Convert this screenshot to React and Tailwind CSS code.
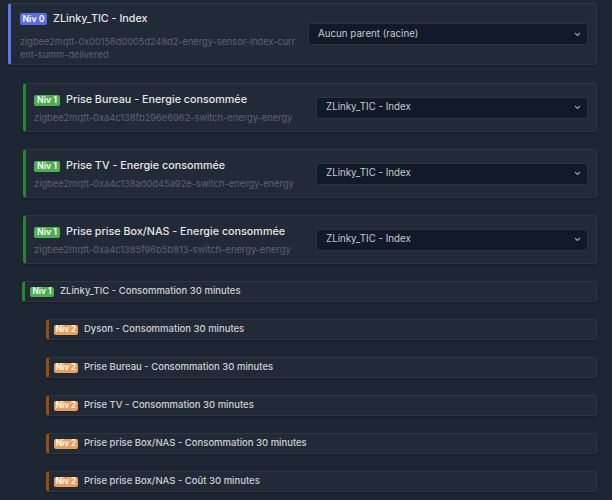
import React from "react";

const LEVELS = {
  0: { border: "border-l-[#5a78f0]", badge: "bg-[#5b6ee6]", label: "Niv 0" },
  1: { border: "border-l-[#1f8a30]", badge: "bg-[#4fae52]", label: "Niv 1" },
  2: { border: "border-l-[#9a4c0c]", badge: "bg-[#e8a15c]", label: "Niv 2" },
};

const cardBase =
  "shrink-0 mr-[15px] border border-[#2f3745] border-l-[3px] rounded-[3px] bg-[#232a37] shadow-[0_1px_2px_rgba(0,0,0,0.35)]";

function Badge({ level, small }) {
  const l = LEVELS[level];
  return (
    <span
      className={`${l.badge} inline-flex items-center justify-center rounded-[2px] text-white font-semibold leading-none shrink-0 ${
        small ? "h-[10px] w-[24px] text-[8.25px]" : "h-[11px] w-[26px] text-[8.75px]"
      }`}
    >
      {l.label}
    </span>
  );
}

function Chevron() {
  return (
    <svg width="7" height="5" viewBox="0 0 7 5" className="shrink-0">
      <path d="M1 1l2.5 2.5L6 1" fill="none" stroke="#9aa1ad" strokeWidth="1.1" />
    </svg>
  );
}

function Select({ value, width }) {
  return (
    <div
      className={`${width} shrink-0 h-[22px] flex items-center justify-between rounded-[3px] bg-[#131a27] border border-[#2c3442] pl-[9px] pr-[6px]`}
    >
      <span className="text-[9.75px] text-[#c5cad2] whitespace-nowrap">{value}</span>
      <Chevron />
    </div>
  );
}

function FullCard({ level, title, entity, parent }) {
  return (
    <div
      className={`${cardBase} ${LEVELS[level].border} ml-[23px] h-[49px] pl-[8px] pr-[8px] flex items-center gap-[10px]`}
    >
      <div className="flex-1 min-w-0 self-start pt-[9px]">
        <div className="flex items-center gap-[6px] h-[14px]">
          <Badge level={level} />
          <span className="text-[10.75px] font-medium text-[#e3e5ea] whitespace-nowrap">{title}</span>
        </div>
        <div className="mt-[4px] text-[9.3px] leading-[13px] text-[#5b6270] whitespace-nowrap">{entity}</div>
      </div>
      <Select value={parent} width="w-[272px]" />
    </div>
  );
}

function CompactCard({ level, title, ml }) {
  return (
    <div className={`${cardBase} ${LEVELS[level].border} ${ml} h-[21px] flex items-center gap-[6px] pl-[5px]`}>
      <Badge level={level} small />
      <span className="text-[9.5px] font-medium text-[#cdd0d6] whitespace-nowrap">{title}</span>
    </div>
  );
}

export default function App() {
  return (
    <div
      className="w-[612px] h-[500px] overflow-hidden bg-[#1f2633] pt-[3px] flex flex-col gap-[17px]"
      style={{ fontFamily: "Inter, 'Noto Sans', sans-serif" }}
    >
      <div
        className={`${cardBase} ${LEVELS[0].border} ml-[8px] mb-[1px] h-[62px] pl-[9px] pr-[8px] flex items-center gap-[9px]`}
      >
        <div className="flex-1 min-w-0 self-start pt-[8px]">
          <div className="flex items-center gap-[6px] h-[14px]">
            <span className="bg-[#5b6ee6] inline-flex items-center justify-center rounded-[2px] text-white font-semibold leading-none shrink-0 h-[12px] w-[27px] text-[8.75px]">
              Niv 0
            </span>
            <span className="text-[10.75px] font-medium text-[#e3e5ea] whitespace-nowrap">ZLinky_TIC - Index</span>
          </div>
          <div className="mt-[9px] text-[9.2px] leading-[13px] text-[#5b6270] break-all">
            zigbee2mqtt-0x00158d0005d248d2-energy-sensor-index-current-summ-delivered
          </div>
        </div>
        <Select value="Aucun parent (racine)" width="w-[280px]" />
      </div>
      <FullCard
        level={1}
        title="Prise Bureau - Energie consommée"
        entity="zigbee2mqtt-0xa4c138fb296e6962-switch-energy-energy"
        parent="ZLinky_TIC - Index"
      />
      <FullCard
        level={1}
        title="Prise TV - Energie consommée"
        entity="zigbee2mqtt-0xa4c138ad0d45a92e-switch-energy-energy"
        parent="ZLinky_TIC - Index"
      />
      <FullCard
        level={1}
        title="Prise prise Box/NAS - Energie consommée"
        entity="zigbee2mqtt-0xa4c1385f96b5b813-switch-energy-energy"
        parent="ZLinky_TIC - Index"
      />
      <CompactCard level={1} ml="ml-[22px]" title="ZLinky_TIC - Consommation 30 minutes" />
      <CompactCard level={2} ml="ml-[46px]" title="Dyson - Consommation 30 minutes" />
      <CompactCard level={2} ml="ml-[46px]" title="Prise Bureau - Consommation 30 minutes" />
      <CompactCard level={2} ml="ml-[46px]" title="Prise TV - Consommation 30 minutes" />
      <CompactCard level={2} ml="ml-[46px]" title="Prise prise Box/NAS - Consommation 30 minutes" />
      <CompactCard level={2} ml="ml-[46px]" title="Prise prise Box/NAS - Coût 30 minutes" />
    </div>
  );
}
